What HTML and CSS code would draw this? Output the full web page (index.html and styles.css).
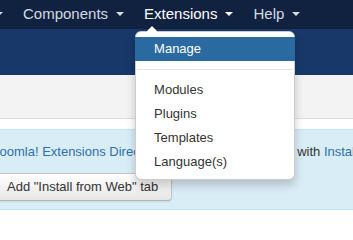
FILE: index.html
```html
<!DOCTYPE html>
<html>
<head>
<meta charset="utf-8">
<link rel="stylesheet" href="styles.css">
</head>
<body>
<nav class="topbar">
  <ul class="menu">
    <li class="menu-item"><a class="menu-link">System<span class="caret"></span></a></li>
    <li class="menu-item"><a class="menu-link">Components<span class="caret"></span></a></li>
    <li class="menu-item open"><a class="menu-link">Extensions<span class="caret"></span></a>
      <ul class="dropdown">
        <li><a class="dd-link active">Manage</a></li>
        <li class="divider"></li>
        <li><a class="dd-link">Modules</a></li>
        <li><a class="dd-link">Plugins</a></li>
        <li><a class="dd-link">Templates</a></li>
        <li><a class="dd-link">Language(s)</a></li>
      </ul>
    </li>
    <li class="menu-item"><a class="menu-link">Help<span class="caret"></span></a></li>
  </ul>
</nav>
<header class="subhead"></header>
<div class="toolbar"></div>
<main class="content">
  <div class="alert">
    <p class="alert-text"><a class="link">Joomla! Extensions Directory™</a> (JED) now available with <a class="link">Install from Web</a> on this page.</p>
    <button class="btn">Add "Install from Web" tab</button>
  </div>
</main>
</body>
</html>
```
FILE: styles.css
```css
html, body {
  margin: 0;
  padding: 0;
  background: #fff;
  overflow: hidden;
  font-family: "Liberation Sans", Arial, sans-serif;
}

.topbar {
  height: 29px;
  background: #10223f;
}

.menu {
  display: flex;
  margin: 0 0 0 -73px;
  padding: 0;
  list-style: none;
  white-space: nowrap;
}

.menu-item {
  position: relative;
}

.menu-link {
  display: block;
  padding: 0 10px;
  height: 29px;
  line-height: 27px;
  font-size: 15px;
  color: #d5dae3;
}

.open .menu-link {
  color: #ffffff;
}

.caret {
  display: inline-block;
  width: 0;
  height: 0;
  margin-left: 8px;
  vertical-align: 3px;
  border-top: 4px solid currentColor;
  border-left: 4px solid transparent;
  border-right: 4px solid transparent;
}

.dropdown {
  position: absolute;
  top: 31px;
  left: 1px;
  width: 158px;
  margin: 0;
  padding: 5px 0;
  list-style: none;
  background: #fff;
  border: 1px solid rgba(0, 0, 0, 0.2);
  border-radius: 6px;
  box-shadow: 0 5px 10px rgba(0, 0, 0, 0.2);
  z-index: 10;
}

.dropdown::before {
  content: "";
  position: absolute;
  top: -7px;
  left: 9px;
  border-left: 7px solid transparent;
  border-right: 7px solid transparent;
  border-bottom: 7px solid rgba(0, 0, 0, 0.2);
}

.dropdown::after {
  content: "";
  position: absolute;
  top: -6px;
  left: 10px;
  border-left: 6px solid transparent;
  border-right: 6px solid transparent;
  border-bottom: 6px solid #fff;
}

.dd-link {
  display: block;
  padding: 3px 19px;
  margin: 0 -1px;
  line-height: 18px;
  font-size: 13px;
  color: #333;
}

.dd-link.active {
  background: #2a6aa1;
  color: #fff;
}

.divider {
  height: 1px;
  margin: 8px 1px;
  background: #e5e5e5;
}

.subhead {
  height: 46px;
  background: #18386a;
}

.toolbar {
  height: 43px;
  background: #f3f3f3;
  border-bottom: 1px solid #dcdcdc;
}

.content {
  padding-top: 10px;
}

.alert {
  margin: 0 -20px;
  padding: 13px 20px 8px 13px;
  background: #d9edf7;
  border-top: 1px solid #bce8f1;
  border-bottom: 1px solid #bce8f1;
  font-size: 13px;
  line-height: 18px;
  color: #333;
  white-space: nowrap;
}

.alert-text {
  margin: 0;
}

.link {
  color: #2f6fa7;
}

.btn {
  display: block;
  margin-top: 12px;
  padding: 4px 13px;
  font-family: "Liberation Sans", Arial, sans-serif;
  font-size: 13px;
  line-height: 18px;
  color: #333;
  background: linear-gradient(#ffffff, #e6e6e6);
  border: 1px solid #c5c5c5;
  border-bottom-color: #b3b3b3;
  border-radius: 4px;
  box-shadow: inset 0 1px 0 rgba(255, 255, 255, 0.2), 0 1px 2px rgba(0, 0, 0, 0.08);
}
```
